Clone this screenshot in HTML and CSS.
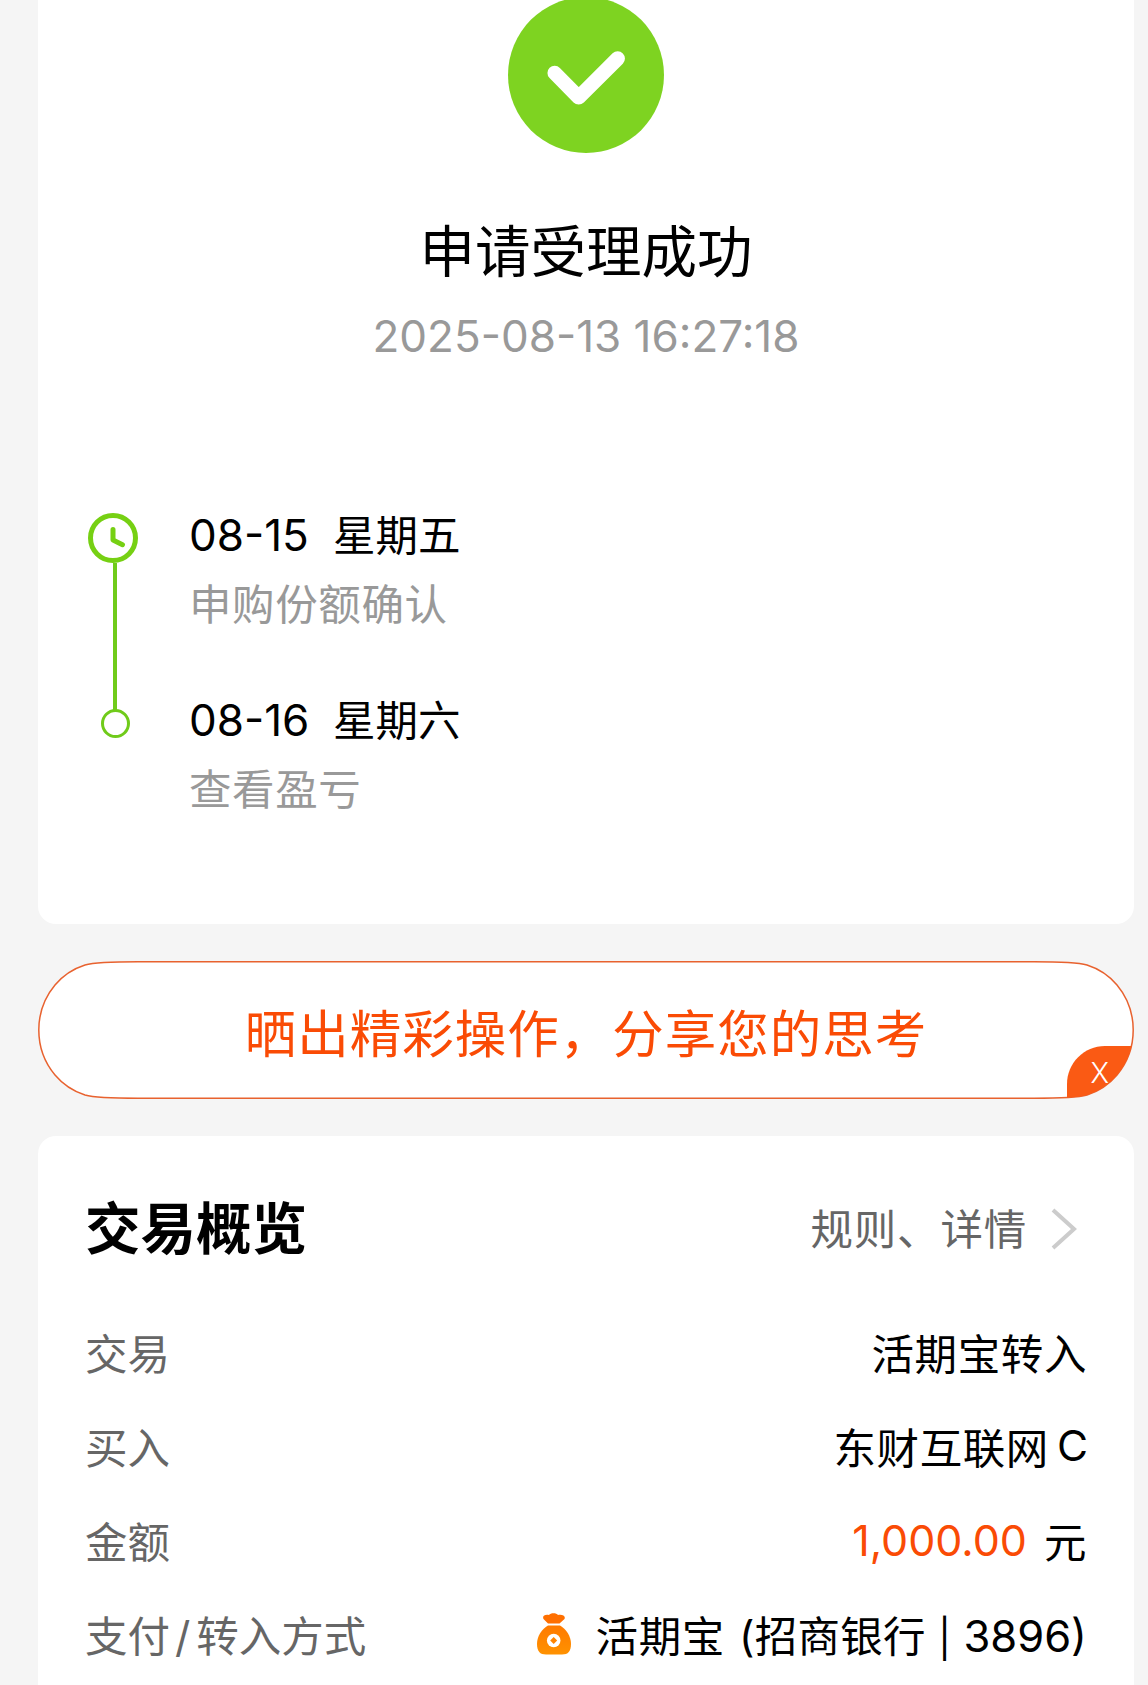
FILE: index.html
```
<!DOCTYPE html>
<html lang="zh-CN">
<head>
  <meta charset="UTF-8" />
  <meta name="viewport" content="width=device-width, initial-scale=1.0" />
  <title>申请受理成功</title>
  <link rel="stylesheet" href="styles.css">
</head>
<body>
  <main class="page">
    <section class="card result">
      <svg class="result-icon" viewBox="0 0 156 156">
        <circle cx="78" cy="78" r="78" fill="#7ed321" />
        <path d="M46.7 76L70.7 100.3L109.7 61.5" fill="none" stroke="#fff" stroke-width="14.5" stroke-linecap="round" stroke-linejoin="round" />
      </svg>
      <h1>申请受理成功</h1>
      <p class="time">2025-08-13 16:27:18</p>

      <ul class="timeline">
        <li>
          <div class="mark">
            <svg class="clock" viewBox="0 0 50 50">
              <circle cx="25" cy="25" r="22.5" fill="#fff" stroke="#76d013" stroke-width="5" />
              <path d="M25 16.5V27L34.5 31.7" fill="none" stroke="#76d013" stroke-width="5" stroke-linecap="round" stroke-linejoin="round" />
            </svg>
            <span class="line"></span>
          </div>
          <div class="step">
            <p class="date"><span class="num">08-15</span>星期五</p>
            <p class="desc">申购份额确认</p>
          </div>
        </li>
        <li>
          <div class="mark"><span class="dot"></span></div>
          <div class="step">
            <p class="date"><span class="num">08-16</span>星期六</p>
            <p class="desc">查看盈亏</p>
          </div>
        </li>
      </ul>
    </section>

    <div class="share">
      <svg class="share-bg" viewBox="0 0 1096 138">
        <defs>
          <path id="pillShape" d="M100 .8H996C1022 .8 1039 1.2 1049 4C1060 7.5 1071 14.5 1079 24C1089 36 1095.2 50 1095.2 69S1089 102 1079 114C1071 123.500 1060 130.500 1049 134C1039 136.800 1022 137.200 996 137.200H100C74 137.200 57 136.800 47 134C36 130.500 25 123.500 17 114C7 102 .8 88 .8 69S7 36 17 24C25 14.500 36 7.500 47 4C57 1.200 74 .8 100 .8Z" />
          <clipPath id="pill"><use href="#pillShape" /></clipPath>
        </defs>
        <use href="#pillShape" fill="#fff" stroke="#e8622f" stroke-width="1.5" />
        <path d="M1029 138V123C1029 102 1046 85 1067 85H1096V138Z" fill="#fa5a14" clip-path="url(#pill)" />
      </svg>
      <span class="share-text">晒出精彩操作，分享您的思考</span>
      <span class="close">X</span>
    </div>

    <section class="card overview">
      <header>
        <h2>交易概览</h2>
        <a class="more">规则、详情
          <svg viewBox="0 0 26 42"><path d="M2 2L23 21L2 40" fill="none" stroke="#ccc" stroke-width="4" /></svg>
        </a>
      </header>
      <dl>
        <div class="row"><dt>交易</dt><dd>活期宝转入</dd></div>
        <div class="row"><dt>买入</dt><dd>东财互联网<span class="cls">C</span></dd></div>
        <div class="row"><dt>金额</dt><dd><span class="amount">1,000.00</span>元</dd></div>
        <div class="row">
          <dt>支付<span class="slash">/</span>转入方式</dt>
          <dd>
            <svg class="bag" viewBox="0 0 34 42">
              <defs>
                <linearGradient id="bagFill" x1="0" y1="0" x2="0" y2="1">
                  <stop offset="0" stop-color="#ff7a00" />
                  <stop offset="1" stop-color="#ff9200" />
                </linearGradient>
              </defs>
              <path d="M11 10.5L6.5 6C5 3 8 1 12 2C13.5 -.2 19.500 -.2 21 2C25 1 29 3 27.500 6L22.500 10.500Z" fill="#ff6f00" />
              <path d="M11 12.500H23C29 16 34 23 34 31C34 38.500 31 41.500 25 41.500H9C3 41.500 0 38.500 0 31C0 23 5 16 11 12.500Z" fill="url(#bagFill)" />
              <circle cx="16.700" cy="27.500" r="6.800" fill="#fff" />
              <path d="M16.700 24L20.200 27.500L16.700 31L13.200 27.500Z" fill="#ff8400" />
            </svg>
            <span class="pay">活期宝</span><span class="bank">(招商银行 <i>|</i> <b>3896)</b></span>
          </dd>
        </div>
      </dl>
    </section>
  </main>
</body>
</html>
```
FILE: styles.css
```
* { box-sizing: border-box; margin: 0; padding: 0; }
body {
  font-family: Inter, 'Noto Sans CJK SC', sans-serif;
  background: #f5f5f5;
  color: #000;
  height: 1685px;
  overflow: hidden;
}
.page {
  display: flex;
  flex-direction: column;
  gap: 37px;
  padding: 0 14px 0 38px;
}
.card {
  background: #fff;
  border-radius: 18px;
}

/* result */
.result {
  height: 924px;
  border-radius: 0 0 18px 18px;
  display: flex;
  flex-direction: column;
  align-items: center;
}
.result-icon {
  width: 156px;
  height: 156px;
  margin-top: -3px;
  flex: none;
}
h1 {
  margin-top: 64px;
  font-size: 55.5px;
  font-weight: 400;
  line-height: 70px;
}
.time {
  margin-top: 24px;
  font-size: 44px;
  line-height: 50px;
  color: #999;
}

/* timeline */
.timeline {
  align-self: stretch;
  margin: 149px 0 0 50px;
  list-style: none;
}
.timeline li {
  display: flex;
  height: 185px;
}
.mark {
  width: 50px;
  margin-right: 51px;
  display: flex;
  flex-direction: column;
  align-items: center;
}
.clock {
  width: 50px;
  height: 50px;
  margin-top: 3px;
  flex: none;
}
.line {
  width: 4px;
  height: 147px;
  margin-left: 4px;
  flex: none;
  background: #70cb1a;
}
.dot {
  width: 29px;
  height: 29px;
  margin: 14px 0 0 5px;
  border: 3px solid #70cb1a;
  border-radius: 50%;
}
.date, .desc {
  font-size: 42.5px;
  line-height: 50px;
  white-space: nowrap;
}
.date .num {
  display: inline-block;
  width: 144px;
  font-size: 44px;
}
.desc {
  margin-top: 19px;
  color: #999;
  letter-spacing: .6px;
}

/* share button */
.share {
  position: relative;
  height: 138px;
  display: flex;
  justify-content: center;
  align-items: center;
}
.share-bg {
  position: absolute;
  inset: 0;
  width: 100%;
  height: 100%;
}
.share-text {
  position: relative;
  font-size: 51.5px;
  letter-spacing: 1px;
  color: #fa4b05;
}
.close {
  position: absolute;
  right: 25px;
  bottom: 9px;
  font-size: 28px;
  font-weight: 300;
  line-height: 34px;
  color: #fff;
}

/* overview */
.overview {
  height: 600px;
  padding: 53px 47px 0 47px;
}
.overview header {
  display: flex;
  justify-content: space-between;
  align-items: center;
  height: 72px;
}
h2 {
  font-size: 55.5px;
  font-weight: 700;
}
.more {
  display: flex;
  align-items: center;
  margin-top: 2px;
  font-size: 42.5px;
  letter-spacing: .8px;
  color: #666;
}
.more svg {
  width: 26px;
  height: 42px;
  margin: 5px 10px 0 24px;
}
dl { margin-top: 43px; }
.row {
  display: flex;
  justify-content: space-between;
  align-items: center;
  height: 94px;
  font-size: 42.5px;
  letter-spacing: .6px;
}
dt {
  color: #666;
  letter-spacing: 0;
}
dd {
  display: flex;
  align-items: center;
}
.slash { margin: 0 6px 0 5px; }
.cls { margin: 1px -1px 0 8px; letter-spacing: 0; }
.amount {
  margin: 2px 17px 0 0;
  font-size: 43px;
  letter-spacing: 0;
  color: #fa4b05;
}
.bag {
  width: 34px;
  height: 42px;
  margin: 2px 25px 0 0;
}
.pay { margin-right: 14px; }
.bank { letter-spacing: .3px; }
.bank i {
  font-size: 38px;
  font-style: normal;
}
.bank b {
  font-size: 43.5px;
  font-weight: 400;
  letter-spacing: 0;
}
```
